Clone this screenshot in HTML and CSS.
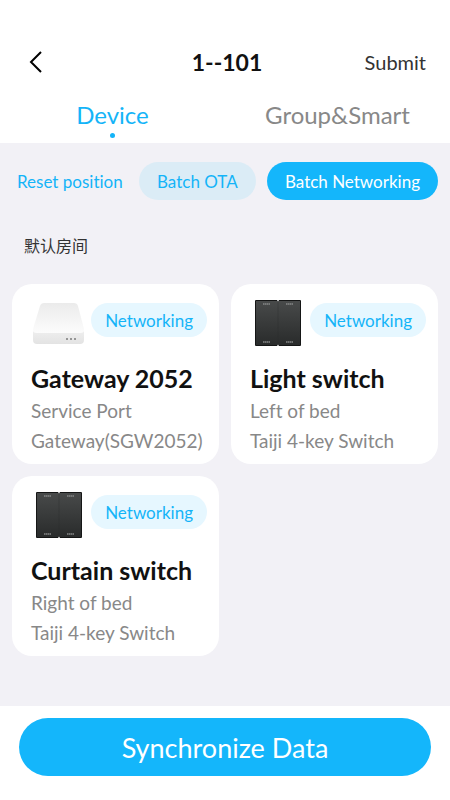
FILE: index.html
```html
<!DOCTYPE html>
<html lang="en">
<head>
  <meta charset="UTF-8" />
  <title>1--101</title>
  <meta name="viewport" content="width=device-width, initial-scale=1.0"/>
  <link rel="stylesheet" href="styles.css">
</head>
<body>

  <!-- Shared drawings -->
  <svg class="defs" width="0" height="0" aria-hidden="true">
    <defs>
      <linearGradient id="panel" x1="0" y1="0" x2="0" y2="1">
        <stop offset="0" stop-color="#484a4a"/>
        <stop offset="1" stop-color="#292b2b"/>
      </linearGradient>
      <symbol id="switch" viewBox="0 0 46 46">
        <rect x="0" y="0" width="46" height="46" rx="1" fill="#151616"/>
        <rect x="1" y="1" width="44" height="44" fill="url(#panel)"/>
        <path d="M23 1v44" stroke="#2a2c2c" stroke-width="1" opacity=".35"/>
        <path d="M22 0h2l-1 1.500zM22 46h2l-1-1.500z" fill="#fff"/>
        <path d="M8 4h7M31 4h7M8 42h7M31 42h7" stroke="#858787" stroke-width="1.500" stroke-dasharray="1.500 .4"/>
      </symbol>
    </defs>
  </svg>

  <header>
    <div class="navbar">
      <button class="back" type="button" aria-label="Back">
        <svg width="14" height="22" viewBox="0 0 14 22" fill="none" stroke="#000" stroke-width="2">
          <path d="M13 1L3 11l10 10"/>
        </svg>
      </button>
      <h1>1--101</h1>
      <button class="submit" type="button">Submit</button>
    </div>
    <nav class="tabs">
      <a class="tab tab-active" href="#device">Device</a>
      <a class="tab" href="#group">Group&amp;Smart</a>
    </nav>
  </header>

  <main id="device">
    <div class="actions">
      <button class="action" type="button">Reset position</button>
      <button class="action action-light" type="button">Batch OTA</button>
      <button class="action action-primary" type="button">Batch Networking</button>
    </div>

    <h2 lang="zh-CN">默认房间</h2>

    <div class="devices">
      <article class="device">
        <div class="device-top">
          <svg class="device-icon" width="56" height="46" viewBox="0 0 56 46" aria-hidden="true">
            <defs>
              <linearGradient id="lid" x1="0" y1="0" x2="0" y2="1">
                <stop offset="0" stop-color="#ebebeb"/>
                <stop offset="1" stop-color="#fcfcfc"/>
              </linearGradient>
              <linearGradient id="base" x1="0" y1="0" x2="0" y2="1">
                <stop offset="0" stop-color="#f0f0f0"/>
                <stop offset="1" stop-color="#e3e3e3"/>
              </linearGradient>
            </defs>
            <path d="M2 29h51v11q0 4-4 4H6q-4 0-4-4z" fill="url(#base)"/>
            <path d="M13 3h30q3 0 4 3l6 23q1 4-4 4H6q-5 0-4-4L9 6q1-3 4-3z" fill="url(#lid)"/>
            <path d="M35 38h2v2h-2zM39 38h2v2h-2zM43 38h2v2h-2z" fill="#969696"/>
          </svg>
          <button class="badge" type="button">Networking</button>
        </div>
        <h3>Gateway 2052</h3>
        <p>Service Port Gateway(SGW2052)</p>
      </article>

      <article class="device">
        <div class="device-top">
          <svg class="device-icon" width="56" height="46" aria-hidden="true"><use href="#switch"/></svg>
          <button class="badge" type="button">Networking</button>
        </div>
        <h3>Light switch</h3>
        <p>Left of bed<br>Taiji 4-key Switch</p>
      </article>

      <article class="device">
        <div class="device-top">
          <svg class="device-icon" width="56" height="46" aria-hidden="true"><use href="#switch"/></svg>
          <button class="badge" type="button">Networking</button>
        </div>
        <h3>Curtain switch</h3>
        <p>Right of bed<br>Taiji 4-key Switch</p>
      </article>
    </div>
  </main>

  <footer>
    <button class="sync" type="button">Synchronize Data</button>
  </footer>

</body>
</html>
```

FILE: styles.css
```css
* {
  box-sizing: border-box;
}

body {
  font-family: Lato, "Noto Sans CJK SC", sans-serif;
  font-variant-ligatures: none;
  background: #f2f1f6;
  color: #111;
  margin: 0;
  min-height: 100vh;
  display: flex;
  flex-direction: column;
}

h1, h2, h3, p {
  margin: 0;
}

button {
  font: inherit;
  font-variant-ligatures: none;
  color: inherit;
  background: none;
  border: none;
  padding: 0;
  cursor: pointer;
}

svg {
  display: block;
}

.defs {
  position: absolute;
}

header {
  background: white;
  padding-top: 40px;
}

/* Title bar */
.navbar {
  display: grid;
  grid-template-columns: 1fr auto 1fr;
  align-items: center;
  height: 43px;
  padding: 0 24px 0 28px;
}

.back {
  justify-self: start;
}

h1 {
  font-size: 23px;
  line-height: 28px;
}

.submit {
  justify-self: end;
  font-size: 20px;
  line-height: 28px;
  color: #333;
}

/* Tabs */
.tabs {
  display: grid;
  grid-template-columns: 1fr 1fr;
  height: 60px;
}

.tab {
  display: flex;
  flex-direction: column;
  align-items: center;
  padding-top: 16px;
  font-size: 24px;
  line-height: 32px;
  color: #888;
  text-decoration: none;
}

.tab-active {
  color: #14b4f8;
}

.tab-active::after {
  content: "";
  width: 5px;
  height: 5px;
  margin-top: 2px;
  border-radius: 50%;
  background: #14b4f8;
}

main {
  flex: 1;
  padding: 19px 12px;
}

.actions {
  display: flex;
  justify-content: space-between;
}

.action {
  height: 38px;
  padding: 0 18px;
  border-radius: 19px;
  font-size: 17px;
  color: #14b4f8;
}

.action:first-child {
  padding: 0 5px;
}

.action-light {
  background: #dbecf6;
}

.action-primary {
  background: #14b6fb;
  color: white;
}

h2 {
  margin: 34px 12px 26px;
  font-size: 16px;
  font-weight: normal;
  line-height: 24px;
  color: #333;
}

/* Device cards */
.devices {
  display: grid;
  grid-template-columns: 1fr 1fr;
  gap: 12px;
}

.device {
  padding: 16px 12px 8px 19px;
  background: white;
  border-radius: 20px;
}

.device-top {
  display: flex;
  justify-content: space-between;
  align-items: center;
}

.badge {
  height: 34px;
  margin-bottom: 6px;
  padding: 0 14px;
  border-radius: 17px;
  background: #e6f7ff;
  color: #14b4f8;
  font-size: 17px;
}

h3 {
  margin: 16px 0 2px;
  font-size: 25px;
  line-height: 32px;
}

.device p {
  font-size: 19px;
  line-height: 30px;
  color: #888;
}

footer {
  padding: 12px 19px 24px;
  background: white;
}

.sync {
  width: 100%;
  height: 58px;
  border-radius: 29px;
  background: #14b6fb;
  color: white;
  font-size: 27px;
}
```
